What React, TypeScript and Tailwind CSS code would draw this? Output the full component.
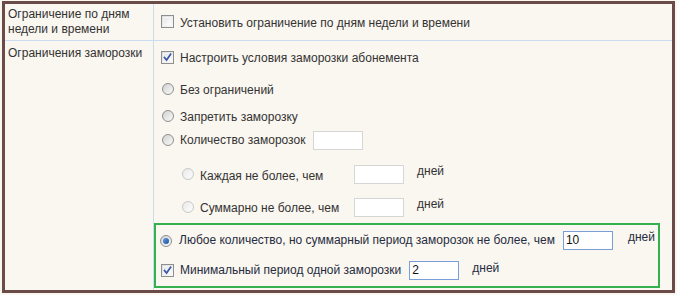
import React from "react";

function Checkbox({ checked }: { checked?: boolean }) {
  return (
    <span className="relative inline-block w-[13px] h-[13px] shrink-0 border border-[#8e8f8f] bg-gradient-to-br from-[#dcdcdc] to-[#fbfbfb]">
      <span className="absolute inset-[1px] border border-[#f4f4f4] bg-gradient-to-br from-[#e6e6e6] to-[#ffffff]" />
      {checked && (
        <svg className="absolute left-[1px] top-[1px]" width="9" height="9" viewBox="0 0 9 9">
          <path d="M1.5 4.5 L3.6 7 L7.6 1.2" stroke="#3b58a8" strokeWidth="1.7" fill="none" strokeLinecap="square" />
        </svg>
      )}
    </span>
  );
}

function Radio({ checked, disabled }: { checked?: boolean; disabled?: boolean }) {
  return (
    <span
      className={
        "relative inline-block w-[12px] h-[12px] shrink-0 rounded-full border " +
        (disabled
          ? "border-[#c9c9c9] bg-gradient-to-br from-[#e9e9e9] to-[#fdfdfd]"
          : "border-[#8f8f8f] bg-gradient-to-br from-[#d2d2d2] to-[#fafafa]")
      }
    >
      {checked && (
        <span className="absolute left-[2px] top-[2px] w-[6px] h-[6px] rounded-full bg-gradient-to-br from-[#5fa0e8] to-[#1c4e9a]" />
      )}
    </span>
  );
}

function Input({ value, focused, className }: { value?: string; focused?: boolean; className?: string }) {
  return (
    <span
      className={
        "inline-flex items-center w-[50px] h-[19px] bg-white border px-[2px] text-[12px] text-[#111] " +
        (focused ? "border-[#7a9fd8] " : "border-[#d6d6d6] ") +
        (className || "")
      }
    >
      {value}
    </span>
  );
}

export default function App() {
  return (
    <div className="w-[677px] h-[295px] bg-[#faf6f0] pl-[2px] pt-[1px] font-['Liberation_Sans',Arial,sans-serif] text-[12px] leading-[15px] text-[#333]">
      <div className="w-[673px] h-[292px] border-[3px] border-[#6a4b47] flex flex-col">
        <div className="flex h-[37px] border-b border-[#c9dcf3] shrink-0">
          <div className="w-[149px] border-r border-[#c9dcf3] pl-[3px] pt-[3px]">
            Ограничение по дням
            <br />
            недели и времени
          </div>
          <div className="flex-1 flex items-center pl-[7px] pb-[1px]">
            <Checkbox />
            <span className="ml-[6px] mt-[3px]">Установить ограничение по дням недели и времени</span>
          </div>
        </div>
        <div className="flex flex-1">
          <div className="w-[149px] border-r border-[#c9dcf3] pl-[3px] pt-[5px]">Ограничения заморозки</div>
          <div className="flex-1 flex flex-col">
            <div className="h-[32px] flex items-center pl-[7px]">
              <Checkbox checked />
              <span className="ml-[6px] mt-[2px]">Настроить условия заморозки абонемента</span>
            </div>
            <div className="h-[32px] flex items-center pl-[8px]">
              <Radio />
              <span className="ml-[6px] mt-[2px]">Без ограничений</span>
            </div>
            <div className="h-[22px] flex items-center pl-[8px]">
              <Radio />
              <span className="ml-[6px] mt-[2px]">Запретить заморозку</span>
            </div>
            <div className="h-[26px] flex items-center pl-[8px]">
              <Radio />
              <span className="ml-[6px] mt-[1px]">Количество заморозок</span>
              <Input className="ml-[8px] h-[18px]" />
            </div>
            <div className="h-[42px] flex items-center pl-[28px]">
              <Radio disabled />
              <span className="ml-[6px] mt-[4px] w-[154px]">Каждая не более, чем</span>
              <Input />
              <span className="ml-[13px] -translate-y-[3px]">дней</span>
            </div>
            <div className="h-[24px] flex items-center pl-[28px]">
              <Radio disabled />
              <span className="ml-[6px] mt-[3px] w-[154px]">Суммарно не более, чем</span>
              <Input />
              <span className="ml-[13px] -translate-y-[3px]">дней</span>
            </div>
            <div className="mt-[4px] w-[506px] h-[65px] border-2 border-[#34b14f] flex flex-col text-[#262c40]">
              <div className="h-[30px] flex items-center pl-[4px] pt-[1px]">
                <Radio checked />
                <span className="ml-[7px]">Любое количество, но суммарный период заморозок не более, чем</span>
                <Input value="10" focused className="ml-[8px]" />
                <span className="ml-[15px] -translate-y-[3px]">дней</span>
              </div>
              <div className="h-[30px] flex items-center pl-[5px]">
                <Checkbox checked />
                <span className="ml-[6px] mt-[1px]">Минимальный период одной заморозки</span>
                <Input value="2" focused className="ml-[8px]" />
                <span className="ml-[13px] -translate-y-[2px]">дней</span>
              </div>
            </div>
          </div>
        </div>
      </div>
    </div>
  );
}
